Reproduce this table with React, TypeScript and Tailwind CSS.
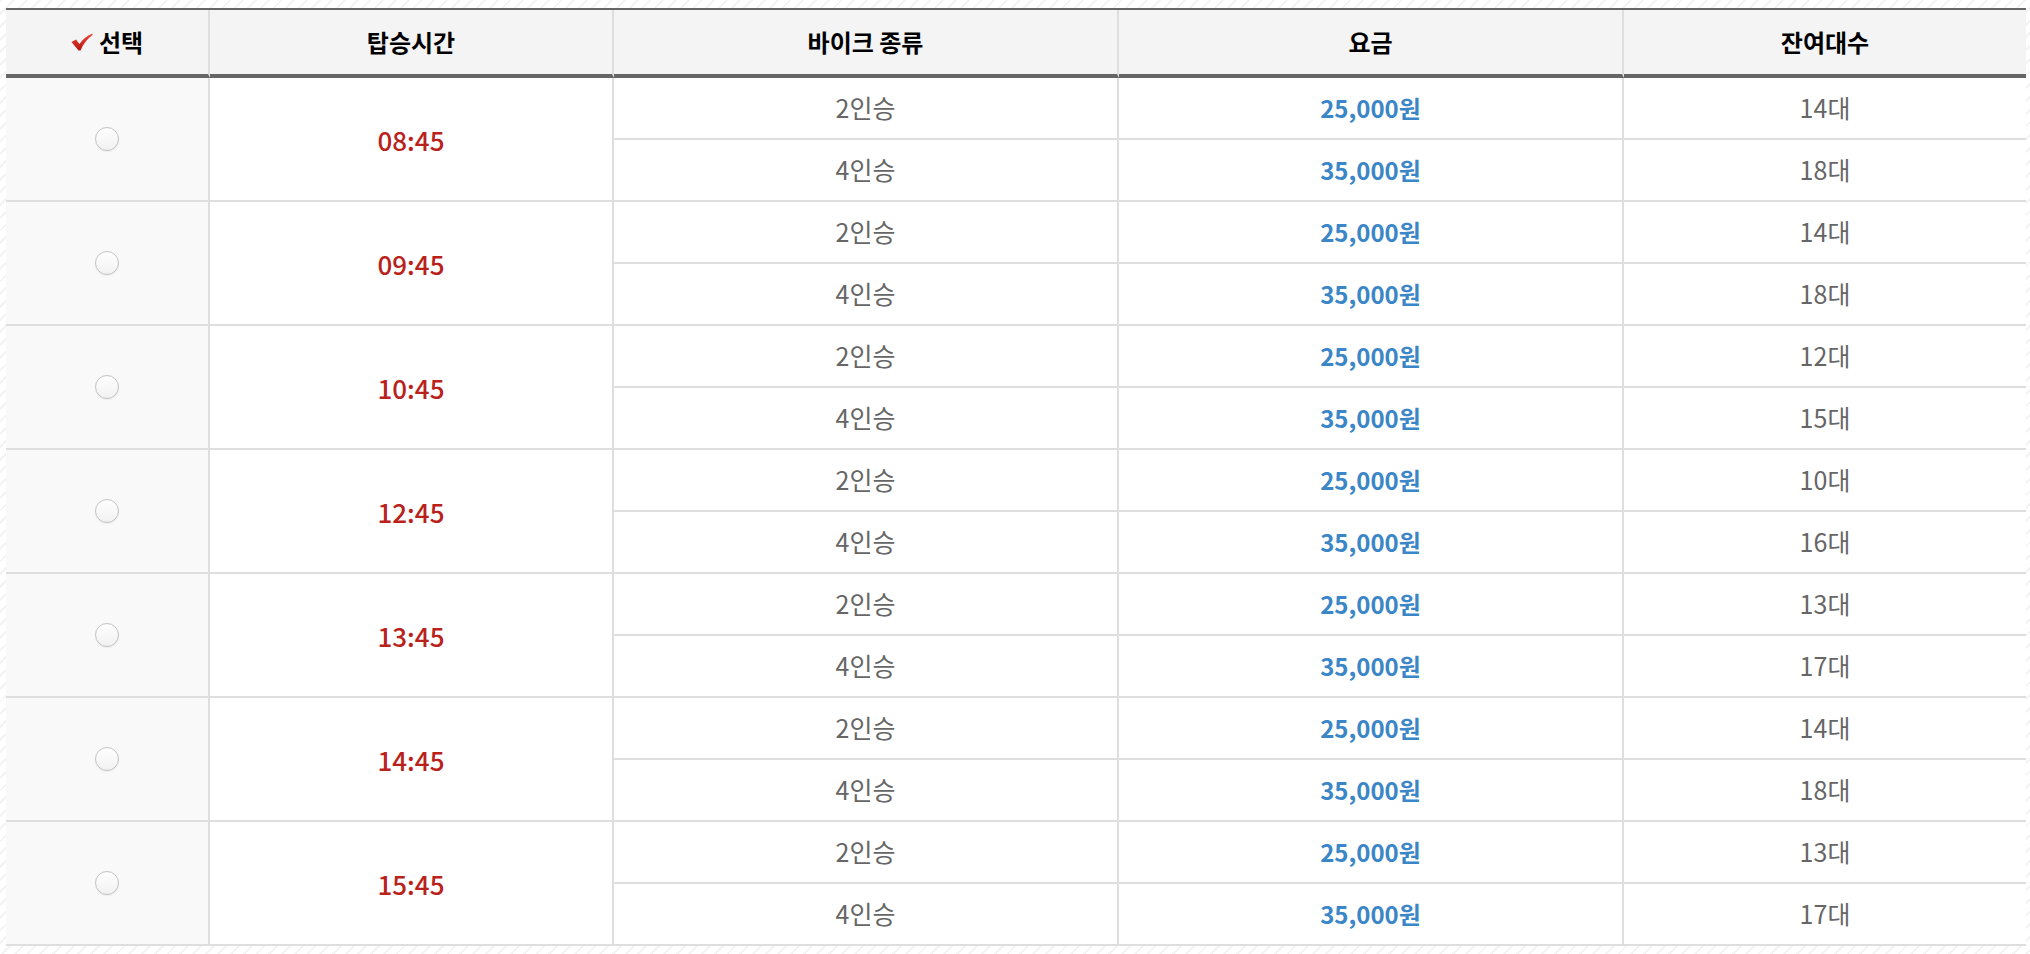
import React from "react";

const SCHEDULE = [
  { time: "08:45", left: [14, 18] },
  { time: "09:45", left: [14, 18] },
  { time: "10:45", left: [12, 15] },
  { time: "12:45", left: [10, 16] },
  { time: "13:45", left: [13, 17] },
  { time: "14:45", left: [14, 18] },
  { time: "15:45", left: [13, 17] },
];

const BIKES = [
  { name: "2인승", price: "25,000원" },
  { name: "4인승", price: "35,000원" },
];

function CheckMark() {
  return (
    <svg width="22" height="18" viewBox="0 0 22 18" aria-hidden>
      <defs>
        <linearGradient id="chk" x1="0" y1="0" x2="0" y2="1">
          <stop offset="0" stopColor="#f2473f" />
          <stop offset="1" stopColor="#b3140e" />
        </linearGradient>
      </defs>
      <path d="M0.5 9 L5 6.5 L8.5 11 C11.5 6.5 15.5 3 21.5 0.5 L21.5 2 C16.5 5.5 12.5 10.5 9.5 17.5 L7.5 17.5 Z" fill="url(#chk)" />
    </svg>
  );
}

function Radio() {
  return (
    <span className="block w-6 h-6 rounded-full border border-[#c2c2c2] bg-gradient-to-b from-white to-[#f1f1f1] shadow-[0_1px_1px_rgba(0,0,0,0.06)]" />
  );
}

export default function App() {
  const th = "h-[68px] flex items-center justify-center bg-[#f4f4f4] border-b-4 border-b-[#666] text-[24px] font-bold text-black";
  const td = "h-[62px] flex items-center justify-center border-b-2 border-b-[#dedede] bg-white";

  return (
    <main
      className="min-h-screen w-full pt-2 pl-[6px] bg-[repeating-linear-gradient(135deg,#f3f3f3_0px,#f3f3f3_2px,#ffffff_2px,#ffffff_9px)]"
      style={{ fontFamily: '"Noto Sans CJK KR", "Noto Sans", sans-serif' }}
    >
      <div className="w-[2020px] border-t-2 border-t-[#666] grid grid-cols-[204px_404px_505px_505px_402px]">
        {/* Header */}
        <div className={`${th} border-r-2 border-r-[#dedede] gap-1.5`}>
          <CheckMark />
          <span>선택</span>
        </div>
        <div className={`${th} border-r-2 border-r-[#dedede]`}>탑승시간</div>
        <div className={`${th} border-r-2 border-r-[#dedede]`}>바이크 종류</div>
        <div className={`${th} border-r-2 border-r-[#dedede]`}>요금</div>
        <div className={th}>잔여대수</div>

        {/* Body */}
        {SCHEDULE.map((s) => (
          <React.Fragment key={s.time}>
            <div className="row-span-2 flex items-center justify-center bg-[#f9f9f9] border-b-2 border-b-[#dedede] border-r-2 border-r-[#dedede]">
              <Radio />
            </div>
            <div className="row-span-2 flex items-center justify-center bg-white border-b-2 border-b-[#dedede] border-r-2 border-r-[#dedede] text-[26px] font-medium text-[#b8221b]">
              {s.time}
            </div>
            {BIKES.map((b, i) => (
              <React.Fragment key={b.name}>
                <div className={`${td} border-r-2 border-r-[#dedede] text-[25px] text-[#666]`}>{b.name}</div>
                <div className={`${td} border-r-2 border-r-[#dedede] text-[24px] font-bold text-[#3b86c6]`}>{b.price}</div>
                <div className={`${td} text-[25px] text-[#666]`}>{s.left[i]}대</div>
              </React.Fragment>
            ))}
          </React.Fragment>
        ))}
      </div>
    </main>
  );
}
